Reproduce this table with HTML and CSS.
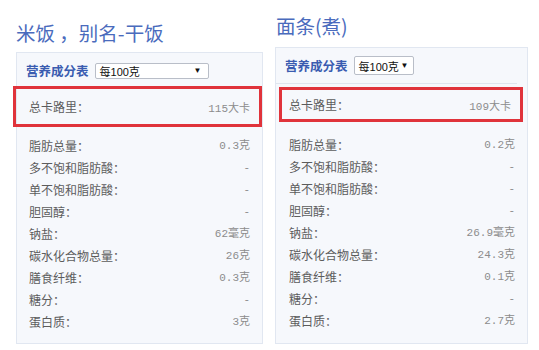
FILE: index.html
```html
<!DOCTYPE html>
<html lang="zh">
<head>
<meta charset="utf-8">
<title>营养成分表</title>
<link rel="stylesheet" href="styles.css">
</head>
<body>
<div class="page">
  <section class="food food-rice">
    <h2 class="food-title">米饭 ，别名-干饭</h2>
    <div class="card">
      <div class="card-head">
        <span class="card-label">营养成分表</span>
        <span class="unit-select unit-wide"><span>每100克</span><span class="arrow">▼</span></span>
      </div>
      <div class="calorie">
        <span class="label">总卡路里：</span><span class="value">115大卡</span>
      </div>
      <ul class="rows">
        <li><span class="label">脂肪总量：</span><span class="value">0.3克</span></li>
        <li><span class="label">多不饱和脂肪酸：</span><span class="value">-</span></li>
        <li><span class="label">单不饱和脂肪酸：</span><span class="value">-</span></li>
        <li><span class="label">胆固醇：</span><span class="value">-</span></li>
        <li><span class="label">钠盐：</span><span class="value">62毫克</span></li>
        <li><span class="label">碳水化合物总量：</span><span class="value">26克</span></li>
        <li><span class="label">膳食纤维：</span><span class="value">0.3克</span></li>
        <li><span class="label">糖分：</span><span class="value">-</span></li>
        <li><span class="label">蛋白质：</span><span class="value">3克</span></li>
      </ul>
    </div>
  </section>
  <section class="food food-noodle">
    <h2 class="food-title">面条(煮)</h2>
    <div class="card">
      <div class="card-head">
        <span class="card-label">营养成分表</span>
        <span class="unit-select"><span>每100克</span><span class="arrow">▼</span></span>
      </div>
      <div class="calorie">
        <span class="label">总卡路里：</span><span class="value">109大卡</span>
      </div>
      <ul class="rows">
        <li><span class="label">脂肪总量：</span><span class="value">0.2克</span></li>
        <li><span class="label">多不饱和脂肪酸：</span><span class="value">-</span></li>
        <li><span class="label">单不饱和脂肪酸：</span><span class="value">-</span></li>
        <li><span class="label">胆固醇：</span><span class="value">-</span></li>
        <li><span class="label">钠盐：</span><span class="value">26.9毫克</span></li>
        <li><span class="label">碳水化合物总量：</span><span class="value">24.3克</span></li>
        <li><span class="label">膳食纤维：</span><span class="value">0.1克</span></li>
        <li><span class="label">糖分：</span><span class="value">-</span></li>
        <li><span class="label">蛋白质：</span><span class="value">2.7克</span></li>
      </ul>
    </div>
  </section>
</div>
</body>
</html>
```

FILE: styles.css
```css
* { box-sizing: border-box; }

html, body {
  margin: 0;
  background: #ffffff;
}

body {
  font-family: "Noto Sans CJK SC", "Noto Sans", sans-serif;
  color: #555;
  height: 350px;
  overflow: hidden;
}

.page {
  display: flex;
  gap: 12px;
  padding-left: 16px;
}

.food-rice { width: 247px; padding-top: 19px; }
.food-noodle { width: 253px; padding-top: 12px; }

.food-title {
  margin: 0 0 5px 0;
  font-size: 19.5px;
  line-height: 28px;
  font-weight: normal;
  color: #4a6bbd;
}

.food-noodle .food-title { margin-left: 1px; margin-bottom: 7px; }

.card {
  background: #f6f8fc;
  border: 1px solid #e1e7f1;
  height: 292px;
}

.food-noodle .card { height: 297px; }

.card-head {
  display: flex;
  align-items: center;
  gap: 6px;
  height: 33px;
  padding: 2px 0 0 9px;
}

.food-noodle .card-head {
  height: 36px;
  margin: 0 10px 3px 0;
  padding: 0 0 0 9px;
  border-bottom: 1px solid #dfe5ee;
}

.card-label {
  font-size: 12.5px;
  font-weight: bold;
  color: #3a5cb0;
}

.unit-select {
  display: flex;
  align-items: center;
  justify-content: space-between;
  height: 16px;
  padding: 0 6px 0 4px;
  background: #fff;
  border: 1px solid #b9bec8;
  border-radius: 2px;
  font-family: "Liberation Sans", "Noto Sans CJK SC", sans-serif;
  font-size: 11px;
  color: #111;
}

.unit-wide { width: 114px; }
.food-noodle .unit-select { width: 60px; height: 19px; padding-right: 4px; }

.arrow { font-size: 8px; }

.calorie {
  display: flex;
  justify-content: space-between;
  align-items: center;
  height: 41px;
  margin: 0 0 8px -4px;
  padding: 0 9px 0 13px;
  border: 3px solid #e0333b;
  font-size: 12px;
}

.food-noodle .calorie {
  height: 35px;
  margin: 0 4px 12px 3px;
  padding: 0 9px 0 7px;
}

.rows {
  list-style: none;
  margin: 0;
  padding: 0 12px 0 12px;
}

.food-noodle .rows { padding: 0 12px 0 13px; }

.rows li {
  display: flex;
  justify-content: space-between;
  height: 22px;
  line-height: 22px;
  font-size: 12px;
}

.label { color: #5c5c5c; }

.value {
  font-family: "Liberation Mono", "Noto Sans CJK SC", monospace;
  font-size: 11px;
  color: #8c8c8c;
}
```
